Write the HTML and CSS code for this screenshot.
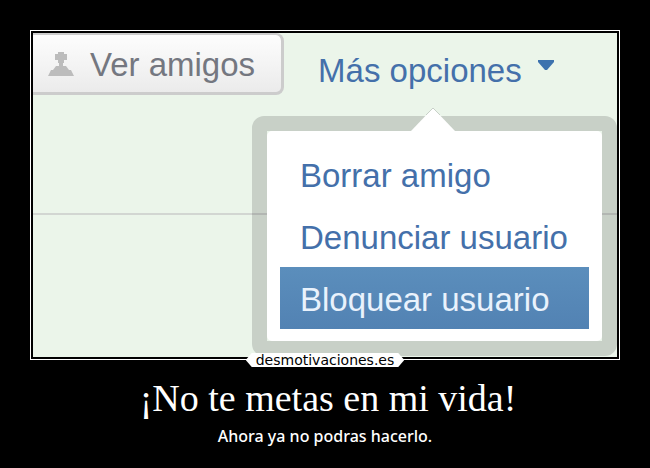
FILE: index.html
```html
<!DOCTYPE html>
<html lang="es">
<head>
<meta charset="utf-8">
<title>¡No te metas en mi vida!</title>
<link rel="stylesheet" href="styles.css">
</head>
<body>
<main class="poster">
  <div class="frame">
    <section class="panel">
      <header class="toolbar">
        <button class="friends" type="button">
          <svg class="friends-icon" viewBox="0 0 26 26" aria-hidden="true">
            <path d="M10 0h6v2h3v6h-3v3h-6V8H7V2h3zM8 14h3v-3h4v3h3l3 4h2l3 6H0l3-6h2z"/>
          </svg>
          Ver amigos
        </button>
        <div class="options">
          <a class="options-link" href="#menu">Más opciones
            <svg class="caret" viewBox="0 0 16 10" aria-hidden="true"><path d="M0 0h16v2L9 10H7L0 2z"/></svg>
          </a>
        </div>
      </header>
      <nav class="menu" id="menu">
        <svg class="menu-arrow" viewBox="0 0 44 24" aria-hidden="true">
          <path class="arrow-fill" d="M0 24L22 1l22 23z"/>
          <path class="arrow-edge" d="M15 8l7-7 7 7"/>
        </svg>
        <a class="item" href="#borrar">Borrar amigo</a>
        <a class="item" href="#denunciar">Denunciar usuario</a>
        <a class="item item-active" href="#bloquear">Bloquear usuario</a>
      </nav>
    </section>
    <a class="brand" href="#inicio">desmotivaciones.es</a>
  </div>
  <h1 class="title">¡No te metas en mi vida!</h1>
  <p class="subtitle">Ahora ya no podras hacerlo.</p>
</main>
</body>
</html>
```
FILE: styles.css
```css
* { box-sizing: border-box; }

body {
  margin: 0;
  background: #000;
  color: #fff;
}

.poster { padding: 30px 30px 0; }

.frame {
  position: relative;
  border: 1px solid #fff;
  padding: 2px;
}

.panel {
  position: relative;
  display: flow-root;
  padding-bottom: 142px;
  overflow: hidden;
  background: #ebf5ea;
  font: 33px/58px "Liberation Sans", Arial, sans-serif;
}

.toolbar {
  display: flex;
  align-items: flex-start;
  height: 182px;
  border-bottom: 2px solid #d2d6d2;
}

.friends {
  display: flex;
  align-items: center;
  gap: 16px;
  height: 62px;
  padding: 2px 26px 0 15px;
  border: solid #cccccc;
  border-width: 2px 3px 3px 0;
  border-radius: 0 8px 8px 0;
  background: linear-gradient(#fdfdfd, #ebebeb);
  color: #747780;
  font: inherit;
}

.friends-icon {
  width: 26px;
  height: 26px;
  fill: #bcbcbc;
}

.options { padding: 9px 0 0 34px; }

.options-link,
.item {
  color: #4470aa;
  text-decoration: none;
}

.options-link {
  display: flex;
  gap: 16px;
}

.caret {
  width: 16px;
  height: 10px;
  margin-top: 18px;
  fill: #3d72ae;
}

.menu {
  position: absolute;
  z-index: 0;
  top: 83px;
  right: 0;
  display: flex;
  flex-direction: column;
  width: 365px;
  padding: 12px 13px;
  border: 15px solid rgba(0, 0, 0, 0.15);
  border-radius: 12px;
}

.menu::before {
  content: "";
  position: absolute;
  inset: 0;
  z-index: -1;
  border-radius: 5px;
  background: #fff;
}

.menu-arrow {
  position: absolute;
  top: -24px;
  left: 144px;
  width: 44px;
  height: 24px;
}

.arrow-fill { fill: #fff; }

.arrow-edge {
  fill: none;
  stroke: #c8d1c8;
}

.item { padding: 4px 20px 0; }

.item-active {
  background: linear-gradient(#5b8ebc, #5282b3);
  color: #e9f2fc;
}

.brand {
  position: absolute;
  bottom: -8px;
  left: 50%;
  transform: translateX(-50%);
  padding: 0 10px;
  background: #fff;
  clip-path: polygon(0 50%, 6px 0, calc(100% - 6px) 0, 100% 50%, calc(100% - 6px) 100%, 6px 100%);
  color: #000;
  font: 14px/14px "DejaVu Sans", sans-serif;
  text-decoration: none;
}

.title {
  margin: 16px 0 0;
  padding-left: 6px;
  font: 38px/44px "Liberation Serif", "Times New Roman", serif;
  text-align: center;
}

.subtitle {
  margin: 5px 0 0;
  font: 500 16px/22px "Noto Sans", sans-serif;
  text-align: center;
}
```
